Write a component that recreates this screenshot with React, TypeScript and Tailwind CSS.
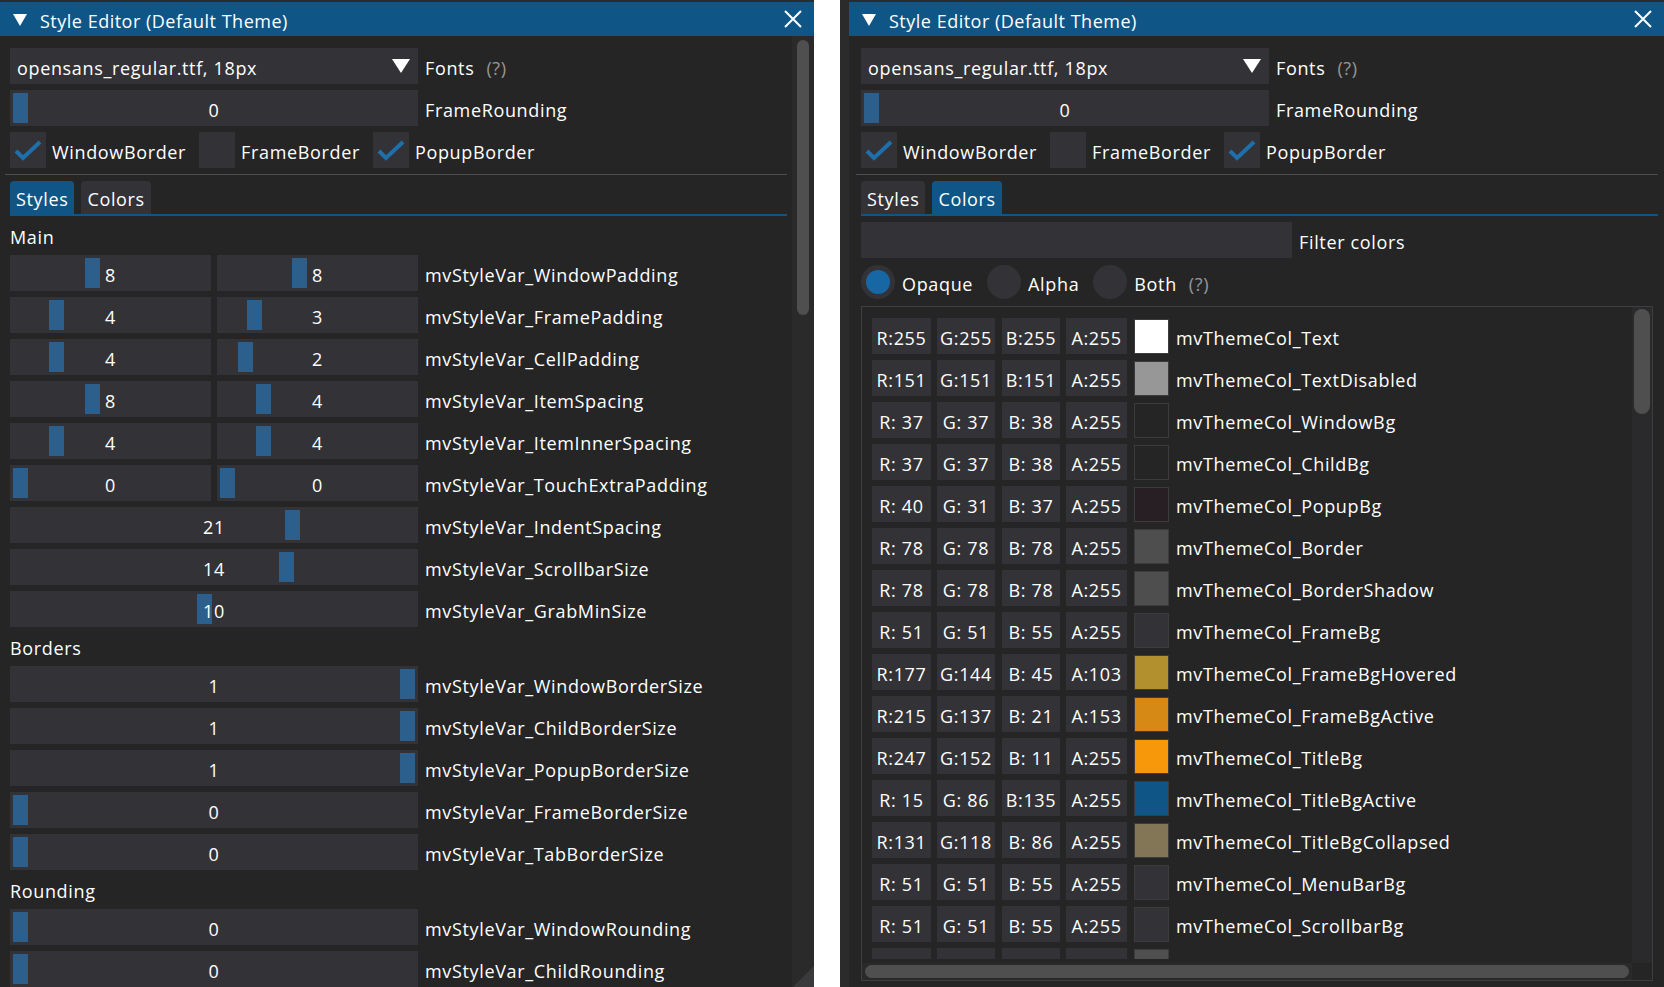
import React from "react";

const FRAME = "bg-[#333337]";
const GRAB = "bg-[#2c5f8b]";
const T = "leading-none pt-[3px]";

type Pair = { name: string; a: number; fa: number; b: number; fb: number };
type Single = { name: string; v: number; f: number };

const mainPairs: Pair[] = [
  { name: "mvStyleVar_WindowPadding", a: 8, fa: 0.4, b: 8, fb: 0.4 },
  { name: "mvStyleVar_FramePadding", a: 4, fa: 0.2, b: 3, fb: 0.15 },
  { name: "mvStyleVar_CellPadding", a: 4, fa: 0.2, b: 2, fb: 0.1 },
  { name: "mvStyleVar_ItemSpacing", a: 8, fa: 0.4, b: 4, fb: 0.2 },
  { name: "mvStyleVar_ItemInnerSpacing", a: 4, fa: 0.2, b: 4, fb: 0.2 },
  { name: "mvStyleVar_TouchExtraPadding", a: 0, fa: 0, b: 0, fb: 0 },
];

const mainSingles: Single[] = [
  { name: "mvStyleVar_IndentSpacing", v: 21, f: 0.703 },
  { name: "mvStyleVar_ScrollbarSize", v: 14, f: 0.687 },
  { name: "mvStyleVar_GrabMinSize", v: 10, f: 0.475 },
];

const borders: Single[] = [
  { name: "mvStyleVar_WindowBorderSize", v: 1, f: 1 },
  { name: "mvStyleVar_ChildBorderSize", v: 1, f: 1 },
  { name: "mvStyleVar_PopupBorderSize", v: 1, f: 1 },
  { name: "mvStyleVar_FrameBorderSize", v: 0, f: 0 },
  { name: "mvStyleVar_TabBorderSize", v: 0, f: 0 },
];

const rounding: Single[] = [
  { name: "mvStyleVar_WindowRounding", v: 0, f: 0 },
  { name: "mvStyleVar_ChildRounding", v: 0, f: 0 },
  { name: "mvStyleVar_FrameRounding", v: 0, f: 0 },
];

type Col = { name: string; r: number; g: number; b: number; a: number };

const colors: Col[] = [
  { name: "mvThemeCol_Text", r: 255, g: 255, b: 255, a: 255 },
  { name: "mvThemeCol_TextDisabled", r: 151, g: 151, b: 151, a: 255 },
  { name: "mvThemeCol_WindowBg", r: 37, g: 37, b: 38, a: 255 },
  { name: "mvThemeCol_ChildBg", r: 37, g: 37, b: 38, a: 255 },
  { name: "mvThemeCol_PopupBg", r: 40, g: 31, b: 37, a: 255 },
  { name: "mvThemeCol_Border", r: 78, g: 78, b: 78, a: 255 },
  { name: "mvThemeCol_BorderShadow", r: 78, g: 78, b: 78, a: 255 },
  { name: "mvThemeCol_FrameBg", r: 51, g: 51, b: 55, a: 255 },
  { name: "mvThemeCol_FrameBgHovered", r: 177, g: 144, b: 45, a: 103 },
  { name: "mvThemeCol_FrameBgActive", r: 215, g: 137, b: 21, a: 153 },
  { name: "mvThemeCol_TitleBg", r: 247, g: 152, b: 11, a: 255 },
  { name: "mvThemeCol_TitleBgActive", r: 15, g: 86, b: 135, a: 255 },
  { name: "mvThemeCol_TitleBgCollapsed", r: 131, g: 118, b: 86, a: 255 },
  { name: "mvThemeCol_MenuBarBg", r: 51, g: 51, b: 55, a: 255 },
  { name: "mvThemeCol_ScrollbarBg", r: 51, g: 51, b: 55, a: 255 },
  { name: "mvThemeCol_ScrollbarGrab", r: 79, g: 79, b: 79, a: 255 },
];

const pad = (n: number) => n.toString().padStart(3, " ");

function Slider({ value, frac, width }: { value: number; frac: number; width: number }) {
  const left = 3 + frac * (width - 21);
  return (
    <div className={`relative flex h-[36px] shrink-0 items-center justify-center ${FRAME}`} style={{ width }}>
      <div className={`absolute top-[3px] bottom-[3px] w-[15px] ${GRAB}`} style={{ left }} />
      <span className={`relative ${T}`}>{value}</span>
    </div>
  );
}

function Check({ on }: { on: boolean }) {
  return (
    <div className={`h-[36px] w-[36px] shrink-0 ${FRAME}`}>
      {on && (
        <svg width="36" height="36" viewBox="0 0 36 36">
          <polyline points="6,19 13,26 30,10" fill="none" stroke="#1f6fab" strokeWidth="4" />
        </svg>
      )}
    </div>
  );
}

function TitleBar() {
  return (
    <div className="flex h-[34px] shrink-0 items-center bg-[#0f5687] pl-[13px] pr-[12px]">
      <svg width="14" height="12" viewBox="0 0 14 12" className="mt-[1px]">
        <polygon points="0,0 14,0 7,12" fill="#ffffff" />
      </svg>
      <span className={`ml-[13px] tracking-[0.5px] ${T}`}>Style Editor (Default Theme)</span>
      <svg width="18" height="18" viewBox="0 0 18 18" className="ml-auto">
        <path d="M1 1 L17 17 M17 1 L1 17" stroke="#ffffff" strokeWidth="2" />
      </svg>
    </div>
  );
}

function Header({ active }: { active: "Styles" | "Colors" }) {
  return (
    <>
      <div className="flex h-[36px] shrink-0 items-center">
        <div className={`flex h-[36px] w-[408px] items-center ${FRAME}`}>
          <span className={`ml-[7px] ${T}`}>opensans_regular.ttf, 18px</span>
          <svg width="18" height="14" viewBox="0 0 18 14" className="ml-auto mr-[8px]">
            <polygon points="0,0 18,0 9,14" fill="#ffffff" />
          </svg>
        </div>
        <span className={`ml-[7px] ${T}`}>Fonts</span>
        <span className={`ml-[12px] text-[#979797] ${T}`}>(?)</span>
      </div>
      <div className="flex h-[36px] shrink-0 items-center">
        <Slider value={0} frac={0} width={408} />
        <span className={`ml-[7px] ${T}`}>FrameRounding</span>
      </div>
      <div className="flex h-[36px] shrink-0 items-center">
        <Check on />
        <span className={`ml-[6px] ${T}`}>WindowBorder</span>
        <div className="ml-[13px]">
          <Check on={false} />
        </div>
        <span className={`ml-[6px] ${T}`}>FrameBorder</span>
        <div className="ml-[13px]">
          <Check on />
        </div>
        <span className={`ml-[6px] ${T}`}>PopupBorder</span>
      </div>
      <div className="-ml-[5px] h-px shrink-0 bg-[#4e4e4e]" />
      <div className="shrink-0">
        <div className="flex h-[33px] items-end gap-[7px]">
          {(["Styles", "Colors"] as const).map((t) => (
            <div
              key={t}
              className={`flex h-[33px] items-center rounded-t-[4px] px-[6px] ${T} ${
                t === active ? "bg-[#0f5687]" : FRAME
              }`}
            >
              {t}
            </div>
          ))}
        </div>
        <div className="h-[2px] bg-[#0f5687]" />
      </div>
    </>
  );
}

function SectionLabel({ text }: { text: string }) {
  return <div className={`flex h-[27px] shrink-0 items-center ${T}`}>{text}</div>;
}

function SingleRow({ s }: { s: Single }) {
  return (
    <div className="flex h-[36px] shrink-0 items-center">
      <Slider value={s.v} frac={s.f} width={408} />
      <span className={`ml-[7px] ${T}`}>{s.name}</span>
    </div>
  );
}

function StylesWindow() {
  return (
    <div className="flex h-full w-[814px] shrink-0 flex-col bg-[#252526]">
      <TitleBar />
      <div className="flex min-h-0 flex-1">
        <div className="flex min-w-0 flex-1 flex-col gap-[6px] overflow-hidden pl-[10px] pr-[5px] pt-[12px]">
          <Header active="Styles" />
          <SectionLabel text="Main" />
          {mainPairs.map((p) => (
            <div key={p.name} className="flex h-[36px] shrink-0 items-center">
              <Slider value={p.a} frac={p.fa} width={201} />
              <div className="ml-[6px]">
                <Slider value={p.b} frac={p.fb} width={201} />
              </div>
              <span className={`ml-[7px] ${T}`}>{p.name}</span>
            </div>
          ))}
          {mainSingles.map((s) => (
            <SingleRow key={s.name} s={s} />
          ))}
          <SectionLabel text="Borders" />
          {borders.map((s) => (
            <SingleRow key={s.name} s={s} />
          ))}
          <SectionLabel text="Rounding" />
          {rounding.map((s) => (
            <SingleRow key={s.name} s={s} />
          ))}
        </div>
        <div className="flex w-[22px] shrink-0 flex-col bg-[#2a2a2b]">
          <div className="mx-[5px] mt-[4px] h-[275px] rounded-full bg-[#4f4f4f]" />
          <svg width="22" height="21" viewBox="0 0 22 21" className="mt-auto">
            <polygon points="22,0 22,21 1,21" fill="#3a3a3c" />
          </svg>
        </div>
      </div>
    </div>
  );
}

function Radio({ on, label, help }: { on: boolean; label: string; help?: boolean }) {
  return (
    <>
      <div className={`flex h-[34px] w-[34px] shrink-0 items-center justify-center rounded-full ${FRAME}`}>
        {on && <div className="h-[24px] w-[24px] rounded-full bg-[#1767a5]" />}
      </div>
      <span className={`ml-[7px] mr-[14px] ${T}`}>{label}</span>
      {help && <span className={`-ml-[2px] text-[#979797] ${T}`}>(?)</span>}
    </>
  );
}

const CELL = `flex h-[36px] items-center justify-center whitespace-pre ${T} ${FRAME}`;

function ColorRow({ c }: { c: Col }) {
  return (
    <div className="flex h-[36px] shrink-0 items-center">
      <div className={`w-[59px] ${CELL}`}>R:{pad(c.r)}</div>
      <div className={`ml-[6px] w-[58px] ${CELL}`}>G:{pad(c.g)}</div>
      <div className={`ml-[7px] w-[58px] ${CELL}`}>B:{pad(c.b)}</div>
      <div className={`ml-[6px] w-[61px] ${CELL}`}>A:{pad(c.a)}</div>
      <div
        className="ml-[7px] h-[35px] w-[35px] border border-[#3c3c3e]"
        style={{ backgroundColor: `rgb(${c.r},${c.g},${c.b})` }}
      />
      <span className={`ml-[7px] whitespace-nowrap ${T}`}>{c.name}</span>
    </div>
  );
}

function ColorsWindow() {
  return (
    <div className="flex h-full w-[815px] shrink-0 flex-col bg-[#252526]">
      <TitleBar />
      <div className="flex min-h-0 flex-1 flex-col gap-[6px] overflow-hidden pb-[6px] pl-[12px] pr-[6px] pt-[12px]">
        <Header active="Colors" />
        <div className="flex h-[36px] shrink-0 items-center">
          <div className={`h-[36px] w-[431px] ${FRAME}`} />
          <span className={`ml-[7px] ${T}`}>Filter colors</span>
        </div>
        <div className="flex h-[36px] shrink-0 items-center">
          <Radio on label="Opaque" />
          <Radio on={false} label="Alpha" />
          <Radio on={false} label="Both" help />
        </div>
        <div className="mr-[5px] flex min-h-0 flex-1 flex-col border border-[#3e3e40]">
          <div className="flex min-h-0 flex-1">
            <div className="mb-[4px] flex min-w-0 flex-1 flex-col gap-[6px] overflow-hidden pl-[10px] pt-[11px]">
              {colors.map((c) => (
                <ColorRow key={c.name} c={c} />
              ))}
            </div>
            <div className="w-[20px] shrink-0 bg-[#2a2a2c] px-[2px] pt-[2px]">
              <div className="h-[105px] rounded-full bg-[#4f4f4f]" />
            </div>
          </div>
          <div className="flex h-[17px] shrink-0">
            <div className="flex flex-1 items-center bg-[#2a2a2c] px-[3px]">
              <div className="h-[13px] w-full rounded-full bg-[#4f4f4f]" />
            </div>
            <div className="w-[20px] bg-[#252526]" />
          </div>
        </div>
      </div>
    </div>
  );
}

export default function App() {
  return (
    <div className="flex h-[987px] w-[1664px] overflow-hidden bg-white font-['Open_Sans',sans-serif] text-[18px] tracking-[0.65px] text-white">
      <div className="h-full shrink-0 bg-[#2b2b2b] pt-[2px]">
        <StylesWindow />
      </div>
      <div className="w-[26px] shrink-0" />
      <div className="h-full shrink-0 bg-[#2b2b2b] pl-[9px] pt-[2px]">
        <ColorsWindow />
      </div>
    </div>
  );
}
